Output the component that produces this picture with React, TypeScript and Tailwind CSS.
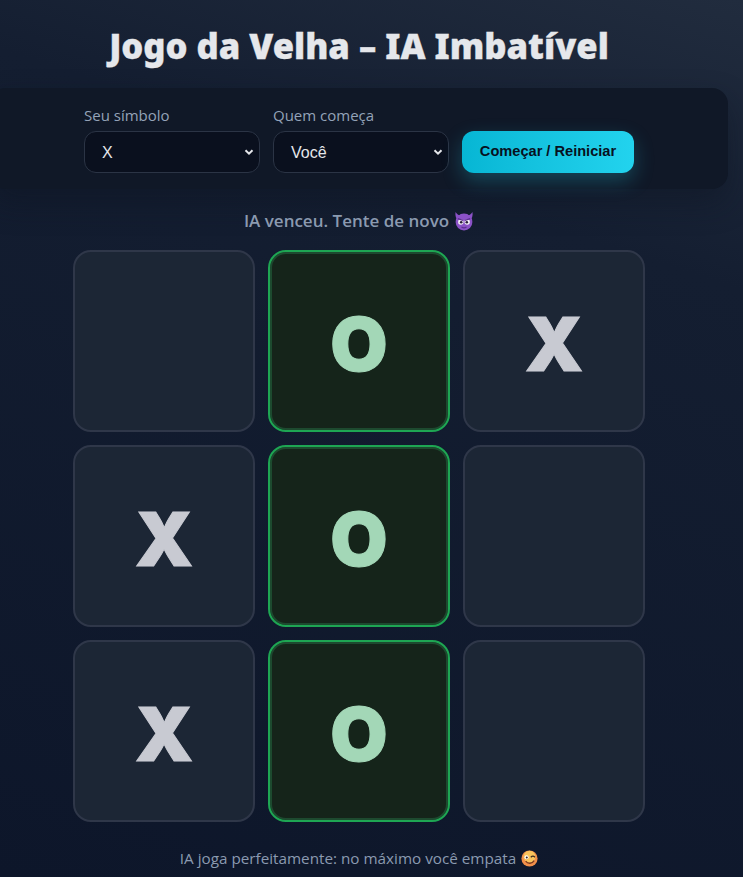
const cells = ["", "O", "X", "X", "O", "", "X", "O", ""];

function Cell({ value }: { value: string }) {
  const isWin = value === "O";
  return (
    <div
      className={
        isWin
          ? "w-[182px] h-[182px] rounded-[18px] border-2 border-[#1ea653] bg-[#15241a] shadow-[inset_0_0_0_2px_#1d4a2f] flex items-center justify-center"
          : "w-[182px] h-[182px] rounded-[18px] border-2 border-[#2f3749] bg-[#1c2635] flex items-center justify-center"
      }
    >
      <span
        className={
          isWin
            ? "font-['Inter'] font-black text-[74px] leading-none text-[#a3d7b7] [-webkit-text-stroke:1px_#a3d7b7] pt-[5px]"
            : "font-['Inter'] font-black text-[74px] leading-none text-[#c8cad2] [-webkit-text-stroke:1px_#c8cad2] pt-[5px]"
        }
      >
        {value}
      </span>
    </div>
  );
}

function DevilIcon() {
  return (
    <svg width="20" height="20" viewBox="0 0 20 20" className="inline-block align-[-4px] ml-[5px]">
      <path d="M1.5 1 C1 5 2 8 4.5 9 L7 4.5 C5 4.5 3 3.5 1.5 1Z M18.5 1 C19 5 18 8 15.5 9 L13 4.5 C15 4.5 17 3.5 18.5 1Z" fill="#8b52c7" />
      <circle cx="10" cy="11" r="8.4" fill="#8b52c7" />
      <circle cx="6.8" cy="11" r="2.7" fill="#f3f0f7" />
      <circle cx="13.2" cy="11" r="2.7" fill="#f3f0f7" />
      <circle cx="7.2" cy="11.3" r="1.3" fill="#2a1d3a" />
      <circle cx="12.8" cy="11.3" r="1.3" fill="#2a1d3a" />
      <path d="M3.8 7.6 L9 9.4 M16.2 7.6 L11 9.4" stroke="#5b2f8f" strokeWidth="1.3" />
      <path d="M7.5 16 C9 17 11 17 12.5 16" stroke="#5b2f8f" strokeWidth="1.2" fill="none" />
    </svg>
  );
}

function WinkIcon() {
  return (
    <svg width="17" height="17" viewBox="0 0 20 20" className="inline-block align-[-3px] ml-[5px]">
      <circle cx="10" cy="10" r="9.5" fill="#f28f4a" />
      <circle cx="10" cy="8" r="7" fill="#f9c45c" />
      <circle cx="6.5" cy="8.5" r="2.4" fill="#fff" />
      <circle cx="6.8" cy="8.8" r="1.2" fill="#3b2a20" />
      <path d="M11.5 8.5 C13 7 15 7 16.5 8.5" stroke="#3b2a20" strokeWidth="1.4" fill="none" />
      <path d="M5.5 13 C8 16.5 13 16.5 15.5 12.5" stroke="#7a3b20" strokeWidth="1.6" fill="none" />
    </svg>
  );
}

function Chevron() {
  return (
    <svg width="10" height="10" viewBox="0 0 10 10">
      <path d="M1.5 3.2 L5 6.7 L8.5 3.2" stroke="#e5e7eb" strokeWidth="2" fill="none" />
    </svg>
  );
}

export default function App() {
  return (
    <div className="h-screen overflow-hidden bg-[linear-gradient(198deg,#212c3e_0%,#141e31_26%,#0d162a_100%)] font-['Open_Sans','Noto_Sans',sans-serif]">
      <div className="w-[718px] flex flex-col items-center">
        <h1 className="mt-[23px] h-[46px] text-[34.6px] leading-[46px] font-black [-webkit-text-stroke:0.3px_#e5e7eb] text-[#e5e7eb] font-['Noto_Sans',sans-serif] whitespace-nowrap">
          Jogo da Velha – IA Imbatível
        </h1>

        <div className="mt-[19px] w-[738px] shrink-0 h-[101px] rounded-[16px] bg-[#101827] shadow-[0_14px_30px_rgba(13,20,34,0.45)] flex justify-center gap-[13px] pt-[16px]">
          <label className="flex flex-col gap-[4px] text-[15px] leading-[23px] text-[#94a3b8]">
            Seu símbolo
            <div className="w-[176px] h-[42px] rounded-[12px] border border-[#2b3445] bg-[#0a101e] flex items-center justify-between pl-[17px] pr-[5px] text-[16px] text-[#e5e7eb] font-['Liberation_Sans',sans-serif]">
              X
              <Chevron />
            </div>
          </label>
          <label className="flex flex-col gap-[4px] text-[15px] leading-[23px] text-[#94a3b8]">
            Quem começa
            <div className="w-[176px] h-[42px] rounded-[12px] border border-[#2b3445] bg-[#0a101e] flex items-center justify-between pl-[17px] pr-[5px] text-[16px] text-[#e5e7eb] font-['Liberation_Sans',sans-serif]">
              Você
              <Chevron />
            </div>
          </label>
          <button className="self-end mb-[16px] w-[172px] h-[42px] rounded-[12px] bg-gradient-to-r from-[#06b6d4] to-[#22d3ee] text-[14.6px] font-bold text-[#07111f] font-['Liberation_Sans',sans-serif] shadow-[0_8px_20px_rgba(34,211,238,0.25)]">
            Começar / Reiniciar
          </button>
        </div>

        <p className="mt-[20px] h-[24px] text-[17px] leading-[24px] font-semibold text-[#8b9ab0] whitespace-nowrap">
          IA venceu. Tente de novo
          <DevilIcon />
        </p>

        <div className="mt-[17px] grid grid-cols-[182px_182px_182px] gap-[13px]">
          {cells.map((value, i) => (
            <Cell key={i} value={value} />
          ))}
        </div>

        <p className="mt-[25px] text-[15.25px] leading-[22px] text-[#8b9ab0] whitespace-nowrap">
          IA joga perfeitamente: no máximo você empata
          <WinkIcon />
        </p>
      </div>
    </div>
  );
}
